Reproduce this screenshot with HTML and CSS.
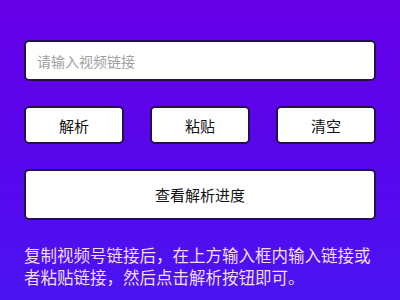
FILE: index.html
```html
<!DOCTYPE html>
<html lang="zh">
<head>
<meta charset="utf-8">
<link rel="stylesheet" href="styles.css">
</head>
<body>
<main class="page">
  <div class="input-box"><span class="placeholder">请输入视频链接</span></div>
  <div class="btn-row">
    <div class="btn">解析</div>
    <div class="btn">粘贴</div>
    <div class="btn">清空</div>
  </div>
  <div class="btn btn-wide">查看解析进度</div>
  <p class="tip">复制视频号链接后，在上方输入框内输入链接或者粘贴链接，然后点击解析按钮即可。</p>
</main>
</body>
</html>
```
FILE: styles.css
```css
html, body {
  margin: 0;
  height: 100%;
}
body {
  background: linear-gradient(180deg, #6600e8 0%, #5608ec 60%, #4a14f0 100%);
  font-family: "Noto Sans CJK SC", "Noto Sans", sans-serif;
  overflow: hidden;
}
.page {
  padding: 40px 24px 0;
  display: flex;
  flex-direction: column;
}
.input-box {
  height: 41px;
  box-sizing: border-box;
  background: #fff;
  border: 2px solid #24104a;
  border-radius: 5px;
  display: flex;
  align-items: center;
  padding-left: 11px;
}
.placeholder {
  color: #a0a0a0;
  font-size: 14px;
}
.btn-row {
  margin-top: 25px;
  display: flex;
  justify-content: space-between;
}
.btn {
  width: 100px;
  height: 38px;
  box-sizing: border-box;
  background: #fff;
  border: 2px solid #24104a;
  border-radius: 5px;
  display: flex;
  align-items: center;
  justify-content: center;
  font-size: 15px;
  color: #111;
}
.btn-wide {
  width: auto;
  height: 51px;
  margin-top: 25px;
}
.tip {
  margin: 24px 0 0;
  color: #f2dcff;
  font-size: 16.5px;
  line-height: 22px;
}
```
